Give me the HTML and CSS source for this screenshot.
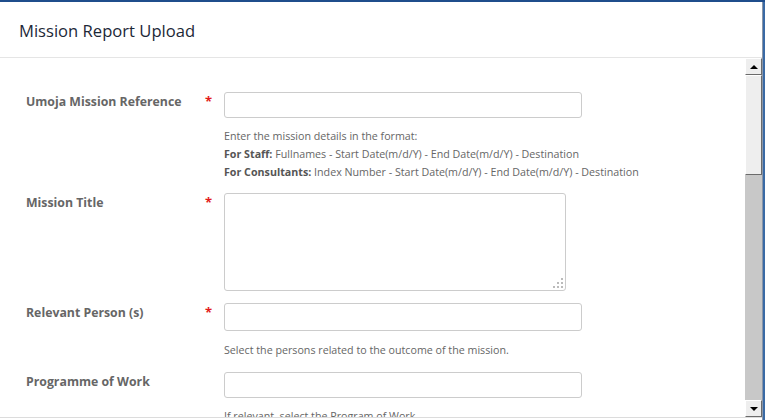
FILE: index.html
```html
<!DOCTYPE html>
<html>
<head>
  <title>Mission Report Upload</title>
  <link rel="stylesheet" href="styles.css">
</head>
<body>
  <div class="modal">
    <div class="modal-header">
      <h4 class="modal-title">Mission Report Upload</h4>
    </div>
    <div class="modal-body">
      <div class="form-area">
        <!-- Umoja reference -->
        <div class="form-group">
          <label class="field-label">Umoja Mission Reference</label>
          <span class="required">*</span>
          <div class="field">
            <input type="text" class="form-input">
            <div class="help">
              Enter the mission details in the format:<br>
              <b>For Staff:</b> Fullnames - Start Date(m/d/Y) - End Date(m/d/Y) - Destination<br>
              <b>For Consultants:</b> Index Number - Start Date(m/d/Y) - End Date(m/d/Y) - Destination
            </div>
          </div>
        </div>

        <div class="form-group">
          <label class="field-label">Mission Title</label>
          <span class="required">*</span>
          <div class="field">
            <div class="textarea-wrap">
              <textarea class="form-textarea"></textarea>
              <span class="grip"></span>
            </div>
          </div>
        </div>

        <div class="form-group">
          <label class="field-label">Relevant Person (s)</label>
          <span class="required">*</span>
          <div class="field">
            <input type="text" class="form-input tall">
            <div class="help">Select the persons related to the outcome of the mission.</div>
          </div>
        </div>

        <div class="form-group">
          <label class="field-label">Programme of Work</label>
          <span class="required"></span>
          <div class="field">
            <input type="text" class="form-input">
            <div class="help">If relevant, select the Program of Work</div>
          </div>
        </div>
      </div>

      <!-- old style scrollbar -->
      <div class="scrollbar">
        <div class="sb-button"><span class="arrow-up"></span></div>
        <div class="sb-thumb"></div>
        <div class="sb-track"></div>
        <div class="sb-button"><span class="arrow-down"></span></div>
      </div>
    </div>
  </div>
</body>
</html>
```

FILE: styles.css
```css
html, body {
  margin: 0;
  padding: 0;
  height: 420px;
  overflow: hidden;
}

body {
  background-color: #3a6aa5; /* page behind the dialog */
  border-top: 2px solid #1f4d8c;
  box-sizing: border-box;
  font-family: "Open Sans", Arial, sans-serif;
}

.modal {
  width: 762px;
  background-color: #fff;
  border-right: 1px solid #8a96a8;
  height: 418px;
}

.modal-header {
  height: 55px;
  border-bottom: 1px solid #e5e5e5;
  display: flex;
  align-items: center;
  padding-left: 19px;
}

.modal-title {
  margin: 0;
  font-size: 16.6px;
  font-weight: 500;
  color: #1c2837;
  padding-top: 1px;
}

.modal-body {
  display: flex;
  height: 359px;
  border-bottom: 1px solid #dcdcdc;
  overflow: hidden;
}

.form-area {
  flex: 1;
  padding: 34px 0 0 26px;
  overflow: hidden;
}

.form-group {
  display: flex;
  align-items: flex-start;
  margin-bottom: 12px;
}

.field-label {
  width: 179px;
  font-size: 12.3px;
  font-weight: bold;
  color: #666;
  line-height: 18px;
  padding-top: 1px;
}

.required {
  width: 19px;
  color: #e31b1b;
  font-weight: bold;
  font-size: 13px;
  line-height: 18px;
}

.field {
  display: flex;
  flex-direction: column;
}

.form-input {
  width: 358px;
  height: 26px;
  box-sizing: border-box;
  border: 1px solid #ccc;
  border-radius: 3px;
  margin: 0;
  padding: 4px 8px;
}

.form-input.tall {
  height: 28px;
}

.form-input.tall + .help {
  margin-top: 10px;
  margin-bottom: 1px;
}

.textarea-wrap {
  position: relative;
}

.form-textarea {
  width: 342px;
  height: 98px;
  box-sizing: border-box;
  border: 1px solid #ccc;
  border-radius: 3px;
  margin: 0;
  display: block;
  resize: none;
}

/* dotted resize grip in the corner */
.grip {
  position: absolute;
  right: 3px;
  bottom: 3px;
  width: 2px;
  height: 2px;
  background-color: #bbb;
  box-shadow: -4px 0 0 #bbb, -8px 0 0 #bbb,
              0 -4px 0 #bbb, -4px -4px 0 #bbb,
              0 -8px 0 #bbb;
}

.help {
  margin-top: 9px;
  font-size: 10.7px;
  line-height: 18px;
  color: #666;
  white-space: nowrap;
}

.help b {
  color: #555;
}

/* Scrollbar drawn by hand, classic windows look */
.scrollbar {
  width: 17px;
  display: flex;
  flex-direction: column;
  background-color: #c8c8c8;
}

.sb-button,
.sb-thumb {
  box-sizing: border-box;
  background-color: #eeeeee;
  border-top: 1px solid #fff;
  border-left: 1px solid #fff;
  border-right: 1px solid #6b6b6b;
  border-bottom: 1px solid #6b6b6b;
}

.sb-button {
  height: 17px;
  display: flex;
  align-items: center;
  justify-content: center;
}

.sb-thumb {
  height: 100px;
}

.sb-track {
  flex: 1;
}

.arrow-up {
  width: 0;
  height: 0;
  border-left: 4px solid transparent;
  border-right: 4px solid transparent;
  border-bottom: 4px solid #000;
}

.arrow-down {
  width: 0;
  height: 0;
  border-left: 4px solid transparent;
  border-right: 4px solid transparent;
  border-top: 4px solid #000;
}
```
